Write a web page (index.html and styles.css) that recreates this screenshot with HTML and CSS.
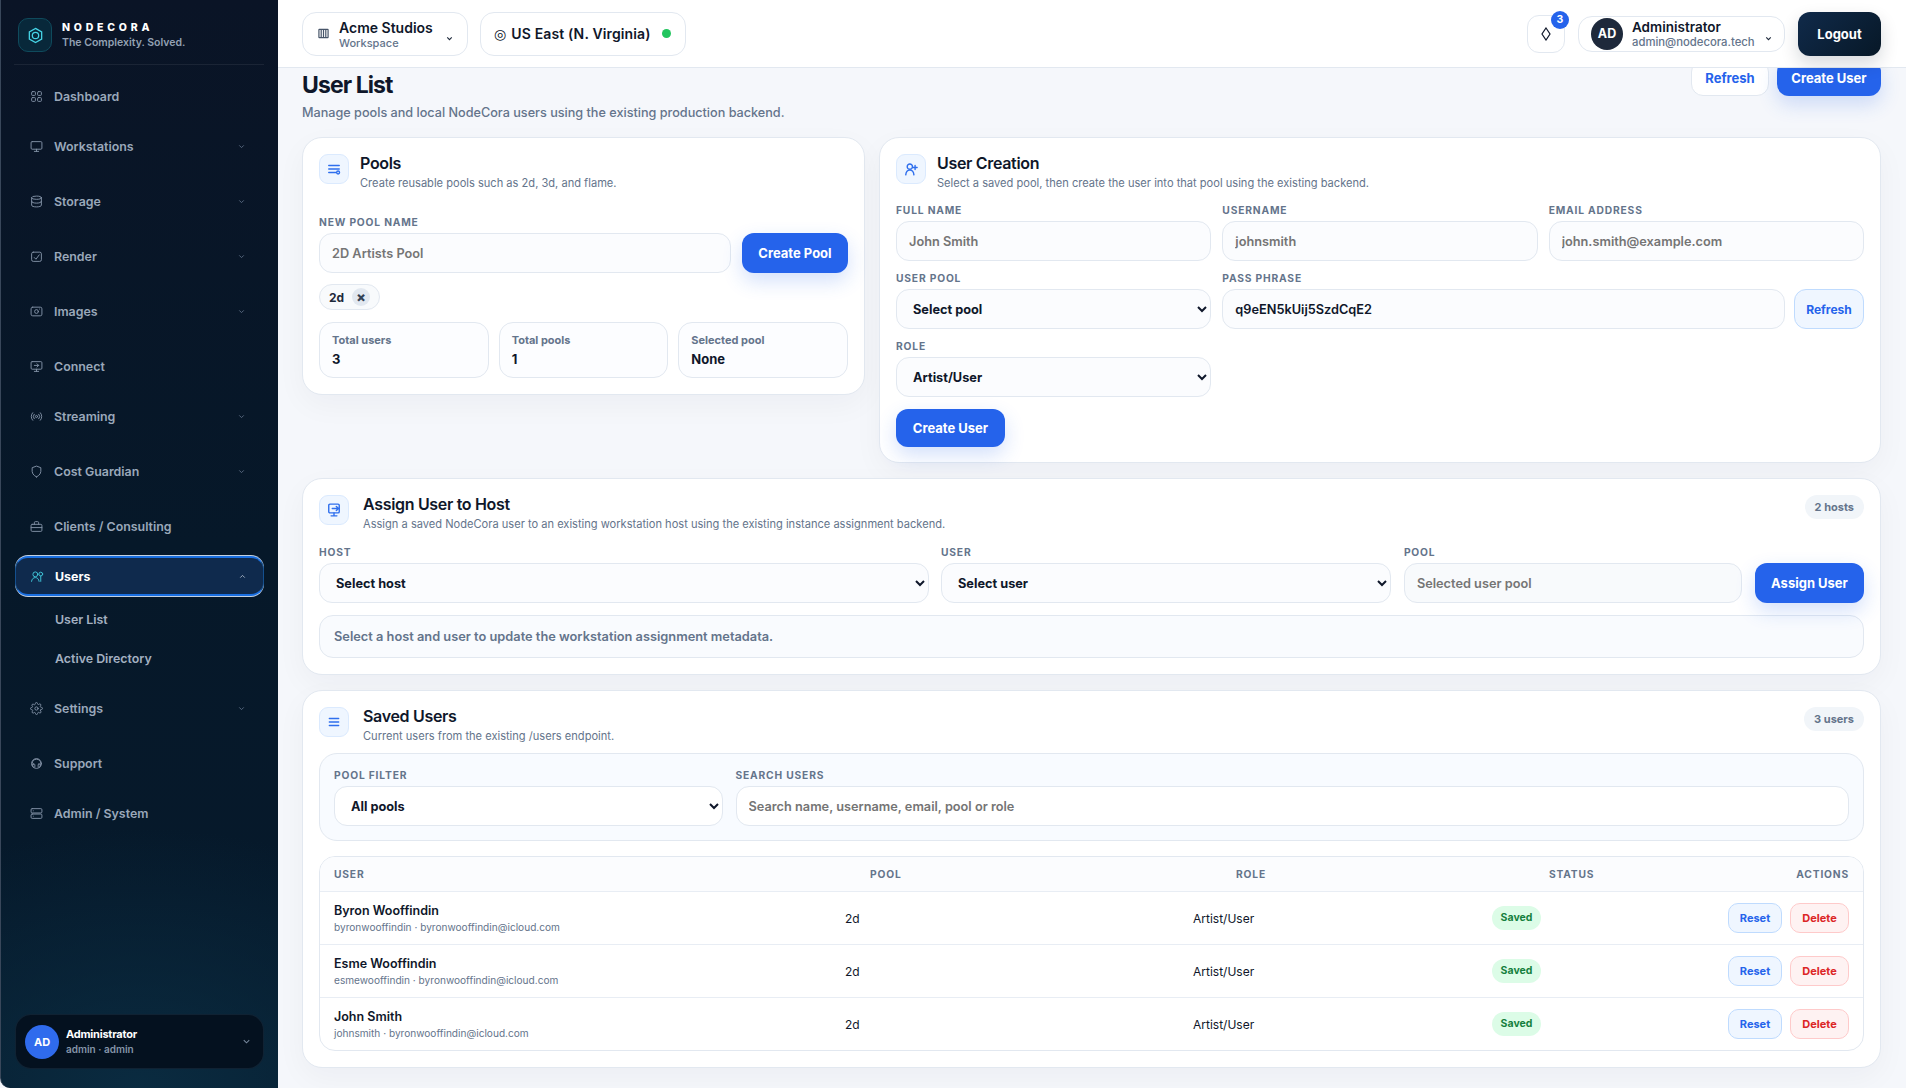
FILE: index.html
```html
<!DOCTYPE html>
<html lang="en">
<head>
    <meta charset="UTF-8">
    <meta name="viewport" content="width=device-width, initial-scale=1.0">
    <title>User List - NodeCora</title>
    <link rel="stylesheet" href="styles.css">
</head>
<body>
    <svg class="sprite" xmlns="http://www.w3.org/2000/svg">
        <symbol id="i-grid" viewBox="0 0 24 24"><rect x="3" y="3" width="7" height="7" rx="1.5"/><rect x="14" y="3" width="7" height="7" rx="1.5"/><rect x="3" y="14" width="7" height="7" rx="1.5"/><rect x="14" y="14" width="7" height="7" rx="1.5"/></symbol>
        <symbol id="i-monitor" viewBox="0 0 24 24"><rect x="2" y="3" width="20" height="14" rx="2"/><path d="M12 17v4M8 21h8"/></symbol>
        <symbol id="i-db" viewBox="0 0 24 24"><ellipse cx="12" cy="5" rx="9" ry="3"/><path d="M3 5v14c0 1.7 4 3 9 3s9-1.3 9-3V5"/><path d="M3 12c0 1.7 4 3 9 3s9-1.3 9-3"/></symbol>
        <symbol id="i-render" viewBox="0 0 24 24"><rect x="3" y="4" width="18" height="17" rx="3"/><path d="M8 14l3 3 6-8"/></symbol>
        <symbol id="i-image" viewBox="0 0 24 24"><rect x="2" y="4" width="20" height="16" rx="3"/><circle cx="12" cy="12" r="3.5"/><path d="M17.5 7.5h.01"/></symbol>
        <symbol id="i-connect" viewBox="0 0 24 24"><rect x="2" y="3" width="20" height="14" rx="2"/><path d="M12 17v4M8 21h8M8 10h8M13 7l3 3-3 3"/></symbol>
        <symbol id="i-radio" viewBox="0 0 24 24"><circle cx="12" cy="12" r="2"/><path d="M16.2 7.8a6 6 0 0 1 0 8.4M7.8 16.2a6 6 0 0 1 0-8.4M19 5a10 10 0 0 1 0 14M5 19A10 10 0 0 1 5 5"/></symbol>
        <symbol id="i-shield" viewBox="0 0 24 24"><path d="M12 22s8-3.5 8-10V5l-8-3-8 3v7c0 6.500 8 10 8 10z"/></symbol>
        <symbol id="i-case" viewBox="0 0 24 24"><rect x="2" y="8" width="20" height="13" rx="2"/><path d="M8 8V5a2 2 0 0 1 2-2h4a2 2 0 0 1 2 2v3M2 14h20"/></symbol>
        <symbol id="i-users" viewBox="0 0 24 24"><circle cx="8" cy="8" r="4.500"/><path d="M1 21c.5-4.500 3.500-7 7-7s6.500 2.500 7 7"/><circle cx="18" cy="7.500" r="3.500"/><path d="M18 11v10"/></symbol>
        <symbol id="i-gear" viewBox="0 0 24 24"><circle cx="12" cy="12" r="3"/><path d="M19.400 15a1.650 1.650 0 0 0 .33 1.820l.06.06a2 2 0 1 1-2.830 2.830l-.06-.06a1.650 1.650 0 0 0-2.800 1.170V21a2 2 0 0 1-4 0v-.09a1.650 1.650 0 0 0-2.800-1.120l-.06.06a2 2 0 1 1-2.830-2.830l.06-.06a1.650 1.650 0 0 0-1.170-2.800H3a2 2 0 0 1 0-4h.09A1.650 1.650 0 0 0 4.210 7.360l-.06-.06a2 2 0 1 1 2.830-2.830l.06.06a1.650 1.650 0 0 0 2.800-1.170V3a2 2 0 0 1 4 0v.09a1.650 1.650 0 0 0 2.800 1.120l.06-.06a2 2 0 1 1 2.830 2.830l-.06.06a1.650 1.650 0 0 0 1.170 2.800H21a2 2 0 0 1 0 4h-.09a1.650 1.650 0 0 0-1.510 1.160z"/></symbol>
        <symbol id="i-headset" viewBox="0 0 24 24"><path d="M4 15v-3a8 8 0 0 1 16 0v3"/><circle cx="12" cy="12" r="9"/><rect x="5" y="13" width="4" height="6" rx="1.500"/><rect x="15" y="13" width="4" height="6" rx="1.500"/></symbol>
        <symbol id="i-server" viewBox="0 0 24 24"><rect x="2" y="3" width="20" height="8" rx="2"/><rect x="2" y="13" width="20" height="8" rx="2"/><path d="M6 7h.01M6 17h.01"/></symbol>
        <symbol id="i-chev" viewBox="0 0 24 24"><path d="M6 9l6 6 6-6"/></symbol>
        <symbol id="i-lines" viewBox="0 0 24 24"><path d="M4 6h16M4 12h16M4 18h16"/></symbol>
        <symbol id="i-pools" viewBox="0 0 24 24"><path d="M3 6h18M3 12h18M3 18h12"/><circle cx="19" cy="18" r="2.500"/></symbol>
        <symbol id="i-useradd" viewBox="0 0 24 24"><circle cx="10" cy="8" r="4.500"/><path d="M3 22c.5-5 3.500-8 7-8s6.500 3 7 8M19 6v7M15.500 9.500h7"/></symbol>
        <symbol id="i-assign" viewBox="0 0 24 24"><rect x="3" y="2" width="18" height="15" rx="2"/><path d="M12 17v5M7 22h10M9 9.500h11M16 6l4 3.500-4 3.500"/></symbol>
        <symbol id="i-building" viewBox="0 0 24 24"><rect x="2" y="3" width="20" height="18" rx="1"/><path d="M7 3v18M12 3v18M17 3v18"/></symbol>
        <symbol id="i-diamond" viewBox="0 0 10 14"><path d="M5 1l4 6-4 6-4-6z"/></symbol>
    </svg>

    <aside class="sidebar">
        <div class="brand">
            <div class="brand-logo">
                <svg viewBox="0 0 24 24" width="17" height="17"><path d="M12 2l8.700 5v10L12 22l-8.700-5V7z"/><circle cx="12" cy="12" r="4.500"/></svg>
            </div>
            <div>
                <div class="brand-name">NODECORA</div>
                <div class="brand-tag">The Complexity. Solved.</div>
            </div>
        </div>

        <nav class="nav">
            <a class="nav-item"><svg class="nav-icon"><use href="#i-grid"/></svg>Dashboard</a>
            <a class="nav-item has-sub"><svg class="nav-icon"><use href="#i-monitor"/></svg>Workstations<svg class="nav-chev"><use href="#i-chev"/></svg></a>
            <a class="nav-item has-sub"><svg class="nav-icon"><use href="#i-db"/></svg>Storage<svg class="nav-chev"><use href="#i-chev"/></svg></a>
            <a class="nav-item has-sub"><svg class="nav-icon"><use href="#i-render"/></svg>Render<svg class="nav-chev"><use href="#i-chev"/></svg></a>
            <a class="nav-item has-sub"><svg class="nav-icon"><use href="#i-image"/></svg>Images<svg class="nav-chev"><use href="#i-chev"/></svg></a>
            <a class="nav-item"><svg class="nav-icon"><use href="#i-connect"/></svg>Connect</a>
            <a class="nav-item has-sub"><svg class="nav-icon"><use href="#i-radio"/></svg>Streaming<svg class="nav-chev"><use href="#i-chev"/></svg></a>
            <a class="nav-item has-sub"><svg class="nav-icon"><use href="#i-shield"/></svg>Cost Guardian<svg class="nav-chev"><use href="#i-chev"/></svg></a>
            <a class="nav-item"><svg class="nav-icon"><use href="#i-case"/></svg>Clients / Consulting</a>
            <a class="nav-item active"><svg class="nav-icon"><use href="#i-users"/></svg>Users<svg class="nav-chev up"><use href="#i-chev"/></svg></a>
            <div class="nav-sub">
                <a class="nav-subitem">User List</a>
                <a class="nav-subitem">Active Directory</a>
            </div>
            <a class="nav-item has-sub"><svg class="nav-icon"><use href="#i-gear"/></svg>Settings<svg class="nav-chev"><use href="#i-chev"/></svg></a>
            <a class="nav-item"><svg class="nav-icon"><use href="#i-headset"/></svg>Support</a>
            <a class="nav-item"><svg class="nav-icon"><use href="#i-server"/></svg>Admin / System</a>
        </nav>

        <div class="side-user">
            <div class="side-avatar">AD</div>
            <div class="side-user-text">
                <div class="side-user-name">Administrator</div>
                <div class="side-user-sub">admin · admin</div>
            </div>
            <svg class="side-chev"><use href="#i-chev"/></svg>
        </div>
    </aside>

    <div class="main">
        <header class="topbar">
            <div class="top-box workspace">
                <svg class="ws-icon"><use href="#i-building"/></svg>
                <div class="ws-text">
                    <div class="ws-name">Acme Studios</div>
                    <div class="ws-sub">Workspace</div>
                </div>
                <svg class="top-chev"><use href="#i-chev"/></svg>
            </div>
            <div class="top-box region">
                <span class="region-glyph">◎</span>
                <span>US East (N. Virginia)</span>
                <span class="dot"></span>
            </div>
            <div class="top-right">
                <div class="bell">
                    <svg class="bell-icon"><use href="#i-diamond"/></svg>
                    <span class="bell-badge">3</span>
                </div>
                <div class="top-user">
                    <div class="top-avatar">AD</div>
                    <div class="top-user-text">
                        <div class="top-user-name">Administrator</div>
                        <div class="top-user-mail">admin@nodecora.tech</div>
                    </div>
                    <svg class="top-chev"><use href="#i-chev"/></svg>
                </div>
                <button class="logout">Logout</button>
            </div>
        </header>

        <main class="content">
            <div class="page-head">
                <div>
                    <h1>User List</h1>
                    <p class="page-sub">Manage pools and local NodeCora users using the existing production backend.</p>
                </div>
                <div class="page-actions">
                    <button class="btn btn-white">Refresh</button>
                    <button class="btn btn-primary">Create User</button>
                </div>
            </div>

            <div class="two-col">
                <section class="card">
                    <div class="card-head head-pools">
                        <div class="card-title-wrap">
                            <div class="card-icon"><svg><use href="#i-pools"/></svg></div>
                            <div>
                                <h2>Pools</h2>
                                <p class="card-desc">Create reusable pools such as 2d, 3d, and flame.</p>
                            </div>
                        </div>
                    </div>
                    <label class="field-label">New pool name</label>
                    <div class="pool-row">
                        <input class="input" placeholder="2D Artists Pool">
                        <button class="btn btn-primary create-pool">Create Pool</button>
                    </div>
                    <div class="tag">2d <span class="tag-x">×</span></div>
                    <div class="stats">
                        <div class="stat"><div class="stat-label">Total users</div><div class="stat-value">3</div></div>
                        <div class="stat"><div class="stat-label">Total pools</div><div class="stat-value">1</div></div>
                        <div class="stat"><div class="stat-label">Selected pool</div><div class="stat-value">None</div></div>
                    </div>
                </section>

                <section class="card">
                    <div class="card-head head-creation">
                        <div class="card-title-wrap">
                            <div class="card-icon"><svg><use href="#i-useradd"/></svg></div>
                            <div>
                                <h2>User Creation</h2>
                                <p class="card-desc">Select a saved pool, then create the user into that pool using the existing backend.</p>
                            </div>
                        </div>
                    </div>
                    <div class="form-grid">
                        <div><label class="field-label">Full name</label><input class="input" placeholder="John Smith"></div>
                        <div><label class="field-label">Username</label><input class="input" placeholder="johnsmith"></div>
                        <div><label class="field-label">Email address</label><input class="input" placeholder="john.smith@example.com"></div>
                        <div><label class="field-label">User pool</label><select class="input select"><option>Select pool</option></select></div>
                        <div class="span-2">
                            <label class="field-label">Pass phrase</label>
                            <div class="pass-row">
                                <input class="input" value="q9eEN5kUij5SzdCqE2">
                                <button class="btn btn-soft">Refresh</button>
                            </div>
                        </div>
                        <div><label class="field-label">Role</label><select class="input select"><option>Artist/User</option></select></div>
                    </div>
                    <button class="btn btn-primary create-user">Create User</button>
                </section>
            </div>

            <section class="card">
                <div class="card-head head-wide">
                    <div class="card-title-wrap wide">
                        <div class="card-icon"><svg><use href="#i-assign"/></svg></div>
                        <div>
                            <h2>Assign User to Host</h2>
                            <p class="card-desc">Assign a saved NodeCora user to an existing workstation host using the existing instance assignment backend.</p>
                        </div>
                    </div>
                    <span class="count-pill">2 hosts</span>
                </div>
                <div class="assign-grid">
                    <div><label class="field-label">Host</label><select class="input select"><option>Select host</option></select></div>
                    <div><label class="field-label">User</label><select class="input select"><option>Select user</option></select></div>
                    <div><label class="field-label">Pool</label><input class="input input-muted" placeholder="Selected user pool" readonly></div>
                    <button class="btn btn-primary assign-btn">Assign User</button>
                </div>
                <div class="note">Select a host and user to update the workstation assignment metadata.</div>
            </section>

            <section class="card">
                <div class="card-head head-saved">
                    <div class="card-title-wrap wide">
                        <div class="card-icon"><svg><use href="#i-lines"/></svg></div>
                        <div>
                            <h2>Saved Users</h2>
                            <p class="card-desc">Current users from the existing /users endpoint.</p>
                        </div>
                    </div>
                    <span class="count-pill">3 users</span>
                </div>
                <div class="filter-panel">
                    <div><label class="field-label">Pool filter</label><select class="input select white"><option>All pools</option></select></div>
                    <div><label class="field-label">Search users</label><input class="input white" placeholder="Search name, username, email, pool or role"></div>
                </div>
                <div class="table">
                    <div class="table-head">
                        <span>User</span><span>Pool</span><span>Role</span><span>Status</span><span class="right">Actions</span>
                    </div>
                    <div class="table-row">
                        <div><div class="u-name">Byron Wooffindin</div><div class="u-sub">byronwooffindin · byronwooffindin@icloud.com</div></div>
                        <div>2d</div>
                        <div>Artist/User</div>
                        <div><span class="saved">Saved</span></div>
                        <div class="row-actions"><button class="mini reset">Reset</button><button class="mini del">Delete</button></div>
                    </div>
                    <div class="table-row">
                        <div><div class="u-name">Esme Wooffindin</div><div class="u-sub">esmewooffindin · byronwooffindin@icloud.com</div></div>
                        <div>2d</div>
                        <div>Artist/User</div>
                        <div><span class="saved">Saved</span></div>
                        <div class="row-actions"><button class="mini reset">Reset</button><button class="mini del">Delete</button></div>
                    </div>
                    <div class="table-row">
                        <div><div class="u-name">John Smith</div><div class="u-sub">johnsmith · byronwooffindin@icloud.com</div></div>
                        <div>2d</div>
                        <div>Artist/User</div>
                        <div><span class="saved">Saved</span></div>
                        <div class="row-actions"><button class="mini reset">Reset</button><button class="mini del">Delete</button></div>
                    </div>
                </div>
            </section>
        </main>
    </div>
</body>
</html>
```

FILE: styles.css
```css
* {
    box-sizing: border-box;
}

html, body {
    height: 100%;
}

body {
    margin: 0;
    display: flex;
    overflow: hidden;
    background: #f5f7fb;
    color: #0f172a;
    font-family: Inter, "Noto Sans", sans-serif;
    font-size: 13px;
}

.sprite {
    display: none;
}

button, input, select {
    font-family: inherit;
}

/* sidebar */
.sidebar {
    width: 278px;
    flex-shrink: 0;
    height: 100%;
    display: flex;
    flex-direction: column;
    padding: 0 14px;
    border-left: 1px solid #39475a;
    border-radius: 0 0 0 10px;
    background:
        radial-gradient(ellipse 380px 260px at 50% 100%, #0a2b40 0%, rgba(10, 43, 64, 0) 100%),
        linear-gradient(180deg, #0a1426 0%, #061829 50%, #061a2c 100%);
}

.brand {
    display: flex;
    align-items: center;
    gap: 10px;
    height: 65px;
    padding: 18px 0 12px 4px;
    margin-left: -1px;
    border-bottom: 1px solid rgba(255, 255, 255, 0.07);
}

.brand-logo {
    width: 34px;
    height: 34px;
    display: flex;
    align-items: center;
    justify-content: center;
    border: 1px solid #0f4a5c;
    border-radius: 10px;
    background: #08283a;
}

.brand-logo svg {
    fill: none;
    stroke: #46d4e6;
    stroke-width: 1.8;
}

.brand-name {
    color: #fff;
    font-size: 10.5px;
    font-weight: 800;
    letter-spacing: 0.36em;
    line-height: 15px;
}

.brand-tag {
    color: #93a1b3;
    font-size: 10.5px;
    font-weight: 600;
    line-height: 15px;
}

.nav {
    display: flex;
    flex-direction: column;
    gap: 10px;
    padding-top: 11px;
}

.nav-item {
    display: flex;
    align-items: center;
    height: 40px;
    padding: 0 18px 0 15px;
    color: #9aa8ba;
    font-size: 12.4px;
    font-weight: 600;
    border-radius: 12px;
}

.nav-item.has-sub {
    margin-bottom: 5px;
}

.nav-icon {
    width: 13px;
    height: 13px;
    margin-right: 11px;
    flex-shrink: 0;
    fill: none;
    stroke: #7f8fa3;
    stroke-width: 1.8;
    stroke-linecap: round;
    stroke-linejoin: round;
}

.nav-chev {
    width: 9px;
    height: 9px;
    margin-left: auto;
    fill: none;
    stroke: #5c6d84;
    stroke-width: 2.4;
}

.nav-chev.up {
    transform: rotate(180deg);
    stroke: #a9b6c6;
    margin-right: -2px;
}

.nav-item.active {
    padding-left: 15px;
    color: #fff;
    font-weight: 700;
    background: #0f2a4d;
    border-style: solid;
    border-width: 2px 1px;
    border-color: #1a6fe0 #14508f;
    border-radius: 13px;
    box-shadow: 0 -1px 0 #c3d0e0, 0 1px 0 #c3d0e0;
}

.nav-item.active .nav-icon {
    stroke: #3fc1d6;
}

.nav-sub {
    display: flex;
    flex-direction: column;
    margin: -2px 0 3px;
    gap: 7px;
}

.nav-subitem {
    height: 32px;
    line-height: 32px;
    padding-left: 40px;
    color: #a3b0c1;
    font-size: 12.4px;
    font-weight: 600;
}

.side-user {
    display: flex;
    align-items: center;
    height: 55px;
    margin: auto 0 19px;
    padding: 0 9px;
    gap: 7px;
    border: 1px solid rgba(90, 140, 180, 0.14);
    border-radius: 16px;
    background: #04111f;
}

.side-avatar {
    width: 34px;
    height: 34px;
    border-radius: 50%;
    display: flex;
    align-items: center;
    justify-content: center;
    color: #fff;
    background: #2f6bed;
    font-size: 11px;
    font-weight: 700;
}

.side-user-name {
    color: #fff;
    font-size: 11px;
    font-weight: 700;
    letter-spacing: -0.02em;
    line-height: 15px;
}

.side-user-sub {
    color: #8595a9;
    font-size: 10px;
    font-weight: 600;
    line-height: 15px;
}

.side-chev {
    width: 11px;
    height: 11px;
    margin-left: auto;
    margin-right: 2px;
    fill: none;
    stroke: #78899e;
    stroke-width: 2.2;
}

/* top bar */
.main {
    flex: 1;
    min-width: 0;
    display: flex;
    flex-direction: column;
}

.topbar {
    position: relative;
    z-index: 5;
    flex-shrink: 0;
    display: flex;
    align-items: center;
    height: 68px;
    padding: 0 25px 0 24px;
    gap: 12px;
    background: #fff;
    border-bottom: 1px solid #e2e8f0;
}

.top-box {
    display: flex;
    align-items: center;
    height: 44px;
    border: 1px solid #e2e8f0;
    border-radius: 14px;
    background: #fff;
}

.workspace {
    width: 166px;
    padding: 0 13px 0 15px;
    gap: 10px;
}

.ws-icon {
    width: 11px;
    height: 11px;
    flex-shrink: 0;
    fill: none;
    stroke: #475569;
    stroke-width: 2.6;
}

.ws-text {
    padding-top: 2px;
}

.ws-name {
    font-size: 14px;
    font-weight: 600;
    line-height: 17px;
}

.ws-sub {
    color: #64748b;
    font-size: 11px;
    font-weight: 500;
    line-height: 14px;
}

.top-chev {
    width: 9px;
    height: 9px;
    margin-left: auto;
    margin-top: 9px;
    flex-shrink: 0;
    fill: none;
    stroke: #1e293b;
    stroke-width: 3;
}

.region {
    width: 206px;
    padding: 0 13px;
    font-size: 14px;
    font-weight: 600;
    letter-spacing: 0.01em;
    gap: 5px;
}

.region-glyph {
    font-family: "DejaVu Sans", sans-serif;
    font-size: 14px;
    font-weight: 400;
}

.dot {
    width: 9px;
    height: 9px;
    border-radius: 50%;
    margin-left: auto;
    margin-right: 1px;
    background: #22c55e;
}

.top-right {
    display: flex;
    align-items: center;
    margin-left: auto;
    gap: 13px;
}

.bell {
    position: relative;
    width: 38px;
    height: 38px;
    display: flex;
    align-items: center;
    justify-content: center;
    border: 1px solid #e2e8f0;
    border-radius: 12px;
}

.bell-icon {
    width: 10px;
    height: 14px;
    fill: none;
    stroke: #0f172a;
    stroke-width: 1.2;
}

.bell-badge {
    position: absolute;
    top: -5px;
    right: -5px;
    width: 18px;
    height: 18px;
    border-radius: 50%;
    display: flex;
    align-items: center;
    justify-content: center;
    color: #fff;
    background: #2563eb;
    font-size: 10.5px;
    font-weight: 700;
}

.top-user {
    display: flex;
    align-items: center;
    width: 207px;
    height: 36px;
    padding: 0 15px 0 12px;
    gap: 9px;
    border: 1px solid #e2e8f0;
    border-radius: 14px;
}

.top-user-text {
    padding-top: 2px;
}

.top-avatar {
    width: 32px;
    height: 32px;
    flex-shrink: 0;
    border-radius: 50%;
    display: flex;
    align-items: center;
    justify-content: center;
    color: #fff;
    background: #1e293b;
    font-size: 12.5px;
    font-weight: 700;
}

.top-user-name {
    font-size: 13.5px;
    font-weight: 600;
    line-height: 15px;
}

.top-user-mail {
    color: #64748b;
    font-size: 11.3px;
    font-weight: 500;
    line-height: 15px;
}

.logout {
    width: 83px;
    height: 44px;
    border: 0;
    border-radius: 12px;
    color: #fff;
    background: linear-gradient(135deg, #102a4a, #071827);
    font-size: 13px;
    font-weight: 700;
    box-shadow: 0 8px 18px rgba(15, 23, 42, 0.16);
}

/* page */
.content {
    flex: 1;
    min-height: 0;
    display: flex;
    flex-direction: column;
    gap: 15px;
    padding: 2px 25px 0 24px;
}

.page-head {
    display: flex;
    justify-content: space-between;
    margin-bottom: -1px;
}

h1 {
    margin: 0 0 3px;
    font-size: 23px;
    font-weight: 700;
    line-height: 30px;
    letter-spacing: -0.04em;
}

.page-sub {
    margin: 0;
    color: #64748b;
    font-size: 12.65px;
    font-weight: 500;
    line-height: 20px;
}

.page-actions {
    display: flex;
    gap: 8px;
    margin-top: -10px;
}

.btn {
    height: 40px;
    border-radius: 12px;
    font-size: 13px;
    font-weight: 700;
    white-space: nowrap;
}

.page-actions .btn {
    height: 36px;
}

.btn-primary {
    width: 104px;
    border: 0;
    color: #fff;
    background: #2563eb;
    box-shadow: 0 8px 20px rgba(37, 99, 235, 0.2);
}

.btn-white {
    width: 78px;
    color: #2563eb;
    background: #fff;
    border: 1px solid #e2e8f0;
}

.btn-soft {
    width: 70px;
    flex-shrink: 0;
    color: #2563eb;
    background: #eff6ff;
    border: 1px solid #bfdbfe;
    font-size: 12px;
}

.two-col {
    display: grid;
    grid-template-columns: 563px 1fr;
    gap: 14px;
    align-items: start;
}

.card {
    padding: 16px;
    border: 1px solid #e2e8f0;
    border-radius: 20px;
    background: #fff;
    box-shadow: 0 10px 30px rgba(15, 23, 42, 0.04);
}

.card-head {
    display: flex;
    justify-content: space-between;
    align-items: flex-start;
}

.head-pools {
    margin-bottom: 25px;
}

.head-creation {
    margin-bottom: 13px;
}

.head-wide {
    margin-bottom: 14px;
}

.head-saved {
    margin-bottom: 9px;
}

.card-title-wrap {
    display: flex;
    gap: 11px;
}

.card-title-wrap.wide {
    gap: 14px;
}

.card-icon {
    width: 30px;
    height: 30px;
    display: flex;
    align-items: center;
    justify-content: center;
    border: 1px solid #dbeafe;
    border-radius: 9px;
    background: #eff6ff;
}

.card-icon svg {
    width: 14px;
    height: 14px;
    fill: none;
    stroke: #2f6fed;
    stroke-width: 2.4;
    stroke-linecap: round;
    stroke-linejoin: round;
}

h2 {
    margin: 0 0 3px;
    font-size: 16px;
    font-weight: 600;
    line-height: 18px;
    letter-spacing: -0.02em;
}

.card-desc {
    margin: 0;
    color: #64748b;
    font-size: 11.1px;
    line-height: 16px;
}

.field-label {
    display: block;
    height: 13px;
    margin-bottom: 4px;
    color: #64748b;
    font-size: 10.25px;
    font-weight: 700;
    line-height: 13px;
    letter-spacing: 0.08em;
    text-transform: uppercase;
}

.input {
    display: block;
    width: 100%;
    height: 40px;
    padding: 0 12px;
    border: 1px solid #e2e8f0;
    border-radius: 13px;
    background: #fbfcfe;
    color: #0f172a;
    font-size: 12.75px;
    font-weight: 600;
    outline: none;
}

.select {
    padding: 0 0 0 12px;
    font-weight: 700;
}

.white {
    background: #fff;
}

.input-muted {
    background: #f8fafc;
}

.pool-row {
    display: flex;
    gap: 11px;
}

.create-pool {
    width: 106px;
    flex-shrink: 0;
}

.tag {
    display: inline-flex;
    align-items: center;
    height: 26px;
    margin-top: 11px;
    padding: 0 9px;
    gap: 8px;
    border: 1px solid #e2e8f0;
    border-radius: 13px;
    background: #f8fafc;
    color: #1e293b;
    font-size: 12px;
    font-weight: 700;
}

.tag-x {
    width: 18px;
    height: 18px;
    border-radius: 50%;
    display: flex;
    align-items: center;
    justify-content: center;
    background: #e2e8f0;
    color: #334155;
    font-size: 14px;
    font-weight: 800;
    line-height: 1;
}

.stats {
    display: grid;
    grid-template-columns: repeat(3, 1fr);
    gap: 10px;
    margin-top: 12px;
}

.stat {
    height: 56px;
    padding: 10px 12px;
    border: 1px solid #e2e8f0;
    border-radius: 14px;
    background: #fcfdff;
}

.stat-label {
    color: #64748b;
    font-size: 11px;
    font-weight: 700;
    line-height: 15px;
}

.stat-value {
    margin-top: 3px;
    font-size: 13px;
    font-weight: 700;
    line-height: 17px;
}

.form-grid {
    display: grid;
    grid-template-columns: repeat(3, 1fr);
    gap: 11px;
}

.span-2 {
    grid-column: span 2;
}

.pass-row {
    display: flex;
    gap: 9px;
}

.create-user {
    display: block;
    width: 109px;
    height: 38px;
    margin: 12px 0 -1px;
}

.assign-grid {
    display: grid;
    grid-template-columns: 1.8fr 1.33fr 1fr 109px;
    gap: 12.5px;
    align-items: end;
}

.assign-btn {
    width: 109px;
}

.note {
    display: flex;
    align-items: center;
    height: 43px;
    margin-top: 12px;
    padding: 0 14px;
    border: 1px solid #e2e8f0;
    border-radius: 14px;
    background: #f9fbfe;
    color: #64748b;
    font-size: 12.8px;
    font-weight: 600;
}

.count-pill {
    height: 24px;
    padding: 0 10px;
    border-radius: 12px;
    background: #f1f5f9;
    color: #64748b;
    font-size: 11px;
    font-weight: 700;
    line-height: 24px;
}

.filter-panel {
    display: grid;
    grid-template-columns: 389px 1fr;
    gap: 12.5px;
    padding: 15px 14px 14px;
    border: 1px solid #e2e8f0;
    border-radius: 18px;
    background: #f8fbff;
}

/* users table */
.table {
    margin-top: 15px;
    border: 1px solid #e2e8f0;
    border-radius: 16px;
    overflow: hidden;
}

.table-head {
    display: grid;
    grid-template-columns: 536px 366px 313px 1fr auto;
    align-items: center;
    height: 34px;
    padding: 0 14px;
    background: #fbfcfe;
    color: #64748b;
    font-size: 10.25px;
    font-weight: 700;
    letter-spacing: 0.08em;
    text-transform: uppercase;
}

.table-row {
    display: grid;
    grid-template-columns: 511px 348px 299px 1fr auto;
    align-items: center;
    height: 53px;
    padding: 0 14px;
    border-top: 1px solid #e8edf4;
    font-size: 12px;
    font-weight: 400;
}

.u-name {
    font-size: 12.5px;
    font-weight: 600;
    line-height: 18px;
}

.u-sub {
    color: #64748b;
    font-size: 10.1px;
    font-weight: 400;
    line-height: 15px;
}

.saved {
    display: block;
    width: 49px;
    height: 24px;
    border-radius: 12px;
    background: #dcfce7;
    color: #15803d;
    font-size: 10.5px;
    font-weight: 700;
    line-height: 24px;
    text-align: center;
}

.row-actions {
    display: flex;
    gap: 8px;
}

.mini {
    height: 30px;
    padding: 0;
    border-radius: 10px;
    font-size: 11px;
    font-weight: 700;
}

.reset {
    width: 54px;
    color: #2563eb;
    background: #eff6ff;
    border: 1px solid #bfdbfe;
}

.del {
    width: 59px;
    color: #dc2626;
    background: #fef2f2;
    border: 1px solid #fecaca;
}
```
